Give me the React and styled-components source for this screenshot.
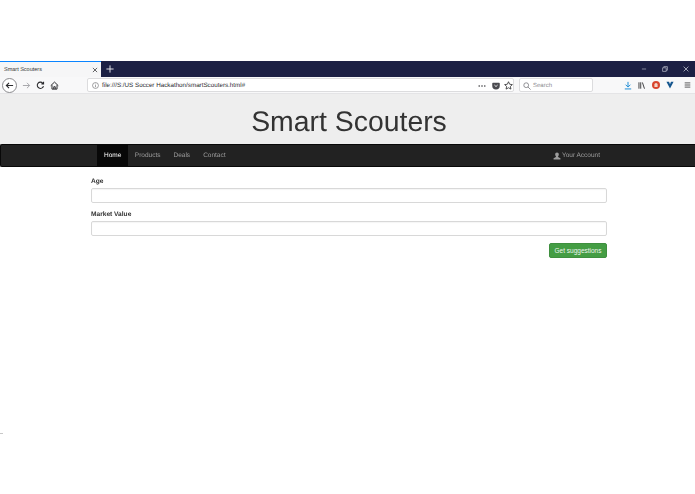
import React from 'react';
import styled, { createGlobalStyle } from 'styled-components';

const GlobalStyle = createGlobalStyle`
  html, body { margin: 0; height: 100%; background: #fff; }
  body {
    font-family: "Liberation Sans", Arial, sans-serif;
    overflow: hidden;
    text-rendering: geometricPrecision;
  }
`;

const Page = styled.div`
  position: relative;
  width: 695px;
  height: 494px;
  padding-top: 61px;
  box-sizing: border-box;
  opacity: 0.999;
`;

const Speck = styled.div`
  position: absolute;
  left: 0;
  top: 433px;
  width: 3px;
  height: 1px;
  background: #c8c8c8;
`;

const TabBar = styled.div`
  height: 16px;
  background: #1c2044;
  display: flex;
  align-items: stretch;
`;

const Tab = styled.div`
  width: 101px;
  box-sizing: border-box;
  background: #f6f6f7;
  border-top: 1px solid #0a84ff;
  display: flex;
  align-items: center;
  justify-content: space-between;
  padding: 0 3px 0 4px;
  font-size: 5.5px;
  color: #333;
`;

const NewTab = styled.div`
  width: 18px;
  display: flex;
  align-items: center;
  justify-content: center;
`;

const WindowControls = styled.div`
  margin-left: auto;
  display: flex;
  align-items: center;
  gap: 15px;
  padding-right: 6px;
`;

const Toolbar = styled.div`
  height: 17px;
  box-sizing: border-box;
  background: #f8f8f9;
  border-bottom: 1px solid #e4e4e6;
  display: flex;
  align-items: center;
`;

const NavIcons = styled.div`
  width: 87px;
  flex: none;
  display: flex;
  align-items: center;
  padding-left: 2px;
  box-sizing: border-box;
  gap: 5px;
`;

const BackCircle = styled.div`
  width: 15px;
  height: 15px;
  box-sizing: border-box;
  border: 1px solid #8a8a8d;
  border-radius: 50%;
  background: #fff;
  display: flex;
  align-items: center;
  justify-content: center;
`;

const UrlBar = styled.div`
  width: 427px;
  height: 14px;
  box-sizing: border-box;
  flex: none;
  background: #fff;
  border: 1px solid #dcdcde;
  border-radius: 2px;
  display: flex;
  align-items: center;
  padding: 1px 0 0 4px;
  font-size: 6.25px;
  color: #2a2a2e;
`;

const UrlText = styled.span`
  margin-left: 3px;
  flex: 1;
  white-space: nowrap;
`;

const UrlActions = styled.div`
  display: flex;
  align-items: center;
  gap: 4px;
`;

const SearchBox = styled.div`
  width: 74px;
  height: 14px;
  margin-left: 5px;
  box-sizing: border-box;
  flex: none;
  background: #fff;
  border: 1px solid #dcdcde;
  border-radius: 2px;
  display: flex;
  align-items: center;
  gap: 2px;
  padding: 1px 0 0 3px;
  font-size: 6px;
  color: #8a8a8f;
`;

const RightIcons = styled.div`
  margin-left: auto;
  display: flex;
  align-items: center;
  gap: 6px;
`;

const IconSlot = styled.span`
  display: flex;
  justify-content: center;
  width: ${p => p.$w}px;
`;

const Jumbotron = styled.div`
  height: 50px;
  background: #eee;
  display: flex;
  align-items: center;
  justify-content: center;
`;

const Title = styled.h1`
  margin: 6px 0 0 3px;
  font-size: 28.4px;
  font-weight: 400;
  line-height: 1;
  color: #333;
`;

const Navbar = styled.nav`
  height: 23px;
  background: #222;
  border: 1px solid #080808;
  border-width: 1px 0 1px 1px;
  border-radius: 2px 0 0 2px;
  box-sizing: border-box;
  display: flex;
  padding: 0 88px 0 96px;
  font-size: 6.5px;
`;

const NavLink = styled.a`
  display: flex;
  align-items: center;
  padding: 0 ${p => (p.$active ? '7px' : '6.5px')};
  color: ${p => (p.$active ? '#fff' : '#9d9d9d')};
  background: ${p => (p.$active ? '#080808' : 'transparent')};
`;

const AccountLink = styled(NavLink)`
  margin-left: auto;
  padding: 0 7px 0 0;
  gap: 1px;
`;

const Form = styled.form`
  width: 516px;
  margin: 11px 0 0 91px;
  display: flex;
  flex-direction: column;
`;

const Label = styled.label`
  font-size: 6.6px;
  font-weight: 700;
  line-height: 8px;
  color: #333;
  margin-bottom: 2px;
`;

const Input = styled.input`
  height: 15px;
  box-sizing: border-box;
  border: 1px solid #d8d8d8;
  border-radius: 2px;
  background: #fff;
  box-shadow: inset 0 1px 1px rgba(0, 0, 0, 0.04);
  margin-bottom: 8px;
  padding: 0;
`;

const SubmitButton = styled.button`
  align-self: flex-end;
  width: 58px;
  height: 15px;
  margin-top: -1px;
  padding: 0;
  border: 1px solid #3f8f3f;
  border-radius: 2px;
  background: #449d44;
  color: #f0f6f0;
  font-family: inherit;
  font-size: 6.5px;
`;

const Glyph = ({ w = 9, h = 9, children, stroke = '#2b2b2e', sw = 1.1 }) => (
  <svg width={w} height={h} viewBox="0 0 10 10" fill="none" stroke={stroke} strokeWidth={sw} style={{ flex: 'none' }}>
    {children}
  </svg>
);

export default function App() {
  return (
    <Page>
      <GlobalStyle />
      <TabBar>
        <Tab>
          Smart Scouters
          <Glyph w={6} h={6} sw={1.2}><path d="M1.5 1.5l7 7M8.5 1.5l-7 7" /></Glyph>
        </Tab>
        <NewTab>
          <Glyph w={8} h={8} stroke="#e8e8ee" sw={1.2}><path d="M5 .5v9M.5 5h9" /></Glyph>
        </NewTab>
        <WindowControls>
          <Glyph w={6} h={6} stroke="#b8bac8"><path d="M1.5 5h7" /></Glyph>
          <Glyph w={6} h={6} stroke="#c4c6d2"><path d="M1 3h6v6H1zM3 3V1h6v6H7" /></Glyph>
          <Glyph w={6} h={6} stroke="#d4d6e0" sw={1.2}><path d="M1 1l8 8M9 1l-8 8" /></Glyph>
        </WindowControls>
      </TabBar>
      <Toolbar>
        <NavIcons>
          <BackCircle>
            <Glyph w={9} h={9} sw={1.2}><path d="M9 5H1.500M4.500 2L1.500 5l3 3" /></Glyph>
          </BackCircle>
          <Glyph w={9} h={9} stroke="#a8a8ac" sw={1.1}><path d="M1 5h7.500M5.500 2l3 3-3 3" /></Glyph>
          <Glyph w={9} h={9} sw={1.2}><path d="M8.300 5.600A3.500 3.500 0 1 1 7.600 2.500M8.400 .8v2.400H6" /></Glyph>
          <Glyph w={9} h={9} sw={1.1}><path d="M.8 5.200L5 1.200l4.200 4M2.200 4.600v4.400h5.600V4.600M4.200 9V6.400h1.600V9" /></Glyph>
        </NavIcons>
        <UrlBar>
          <Glyph w={7} h={7} stroke="#6a6a6e" sw={0.9}>
            <circle cx="5" cy="5" r="4.200" />
            <path d="M5 4.400v3M5 2.400v1" />
          </Glyph>
          <UrlText>file:///S:/US Soccer Hackathon/smartScouters.html#</UrlText>
          <UrlActions>
            <Glyph w={8} h={8} stroke="none">
              <g fill="#3a3a3e"><circle cx="1.500" cy="5" r="1" /><circle cx="5" cy="5" r="1" /><circle cx="8.500" cy="5" r="1" /></g>
            </Glyph>
            <svg width="8" height="8" viewBox="0 0 10 10" style={{ marginLeft: 2 }}>
              <path d="M1.200 1h7.600c.5 0 .9.4.9.9v2.700a4.700 4.700 0 0 1-9.400 0V1.900c0-.5.4-.9.900-.9z" fill="#4a4a4f" />
              <path d="M3 3.800L5 5.700l2-1.900" fill="none" stroke="#fff" strokeWidth="1.100" />
            </svg>
            <Glyph w={9} h={9} sw={0.9}><path d="M5 .8l1.300 2.800 3 .4-2.200 2 .6 3L5 7.500 2.300 9l.6-3L.7 4l3-.4z" /></Glyph>
          </UrlActions>
        </UrlBar>
        <SearchBox>
          <Glyph w={8} h={8} stroke="#77777c" sw={1}><circle cx="4" cy="4" r="3" /><path d="M6.200 6.200l3.300 3.300" /></Glyph>
          Search
        </SearchBox>
        <RightIcons>
          <IconSlot $w={8}><Glyph w={8} h={9} stroke="#1a8ad4" sw={1.2}><path d="M5 .5v6M2 4l3 3 3-3M1 9.300h8" /></Glyph></IconSlot>
          <IconSlot $w={8}><Glyph w={8} h={9} sw={1.1}><path d="M1.200 1v8M3.400 1v8M5.500 1.200l2.600 7.800" /></Glyph></IconSlot>
          <IconSlot $w={8}>
            <svg width="8" height="8" viewBox="0 0 10 10">
              <circle cx="5" cy="5" r="5" fill="#d8452e" />
              <path d="M3 7.500V4.500a2 2 0 0 1 4 0v3z" fill="#f3d6c8" />
            </svg>
          </IconSlot>
          <IconSlot $w={8}>
            <svg width="8" height="8" viewBox="0 0 10 10">
              <path d="M.5 1h3.300L5 4l1.200-3h3.300L5 9.500z" fill="#15568f" />
            </svg>
          </IconSlot>
          <IconSlot $w={15}><Glyph w={7} h={8} sw={1.1}><path d="M1 2h8M1 5h8M1 8h8" /></Glyph></IconSlot>
        </RightIcons>
      </Toolbar>
      <Jumbotron>
        <Title>Smart Scouters</Title>
      </Jumbotron>
      <Navbar>
        <NavLink $active>Home</NavLink>
        <NavLink>Products</NavLink>
        <NavLink>Deals</NavLink>
        <NavLink>Contact</NavLink>
        <AccountLink>
          <svg width="8" height="8" viewBox="0 0 10 10">
            <path d="M5 .5c1.500 0 2.300 1.100 2.300 2.600 0 1-.4 1.900-1 2.400v.9l3 1.300v1.800H.7V7.700l3-1.300v-.9c-.6-.5-1-1.400-1-2.400C2.700 1.600 3.500.5 5 .5z" fill="#9d9d9d" />
          </svg>
          Your Account
        </AccountLink>
      </Navbar>
      <Form onSubmit={e => e.preventDefault()}>
        <Label>Age</Label>
        <Input />
        <Label>Market Value</Label>
        <Input />
        <SubmitButton>Get suggestions</SubmitButton>
      </Form>
      <Speck />
    </Page>
  );
}
